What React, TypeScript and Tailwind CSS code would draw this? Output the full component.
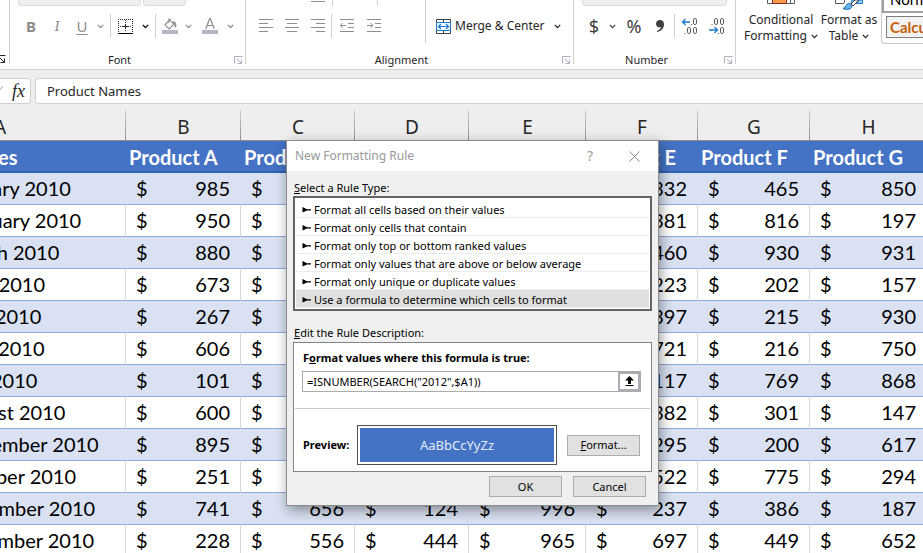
import { useState, type ReactNode } from "react";
import clsx from "clsx";

type Amount = number | null;

interface Row {
  month: string;
  amounts: Amount[];
}

const COLUMNS = ["A", "B", "C", "D", "E", "F", "G", "H"];

const HEADERS = [
  "Names",
  "Product A",
  "Product B",
  "Product C",
  "Product D",
  "Product E",
  "Product F",
  "Product G",
];

const ROWS: Row[] = [
  { month: "January 2010", amounts: [985, null, null, null, 332, 465, 850] },
  { month: "February 2010", amounts: [950, null, null, null, 381, 816, 197] },
  { month: "March 2010", amounts: [880, null, null, null, 460, 930, 931] },
  { month: "April 2010", amounts: [673, null, null, null, 223, 202, 157] },
  { month: "May 2010", amounts: [267, null, null, null, 397, 215, 930] },
  { month: "June 2010", amounts: [606, null, null, null, 721, 216, 750] },
  { month: "July 2010", amounts: [101, null, null, null, 117, 769, 868] },
  { month: "August 2010", amounts: [600, null, null, null, 382, 301, 147] },
  { month: "September 2010", amounts: [895, null, null, null, 295, 200, 617] },
  { month: "October 2010", amounts: [251, null, null, null, 522, 775, 294] },
  { month: "November 2010", amounts: [741, 656, 124, 996, 237, 386, 187] },
  { month: "December 2010", amounts: [228, 556, 444, 965, 697, 449, 652] },
];

const RULE_TYPES = [
  "Format all cells based on their values",
  "Format only cells that contain",
  "Format only top or bottom ranked values",
  "Format only values that are above or below average",
  "Format only unique or duplicate values",
  "Use a formula to determine which cells to format",
];

/* ---------- icons ---------- */

function Chevron({ className }: { className?: string }) {
  return (
    <svg width="7" height="5" viewBox="0 0 7 5" className={clsx("shrink-0", className)} aria-hidden="true">
      <path d="M0.8 0.9 3.5 3.6 6.2 0.9" fill="none" stroke="currentColor" strokeWidth="1.3" />
    </svg>
  );
}

function LauncherIcon() {
  return (
    <svg width="9" height="9" viewBox="0 0 9 9" fill="none" stroke="currentColor" aria-hidden="true">
      <path d="M8.5 0.5H0.5V7.5" />
      <path d="M3 3 7.5 7.5M7.5 3.5V7.5H3.5" />
    </svg>
  );
}

function LinesIcon({ rows }: { rows: [number, number][] }) {
  return (
    <svg width="14" height="14" viewBox="0 0 14 14" stroke="#8f8f8f" aria-hidden="true">
      {rows.map(([from, to], i) => (
        <path key={i} d={`M${from} ${i * 4 + 0.5}H${to}`} />
      ))}
    </svg>
  );
}

function IndentIcon({ inward }: { inward?: boolean }) {
  return (
    <svg width="14" height="14" viewBox="0 0 14 14" fill="none" stroke="#8f8f8f" aria-hidden="true">
      <path d="M0 0.5H14M8 4.5H14M8 8.5H14M0 12.5H14" />
      {inward ? (
        <path d="M0 6.5H5.5M3.5 4 6 6.5 3.5 9" />
      ) : (
        <path d="M0.5 6.5H6M2.5 4 0.5 6.5 2.5 9" />
      )}
    </svg>
  );
}

function BordersIcon() {
  return (
    <svg width="15" height="15" viewBox="0 0 15 15" fill="none" stroke="#262626" aria-hidden="true">
      <path d="M0 0.5H15M0.5 0V13M14.5 0V13" strokeDasharray="1 1" />
      <path d="M7.5 1V12M2 7.5H13" strokeDasharray="1 1" />
      <path d="M7.5 5V10M5 7.5H10" />
      <path d="M0 14.5H15" stroke="#000" />
    </svg>
  );
}

function FillIcon() {
  return (
    <svg width="16" height="16" viewBox="0 0 16 16" fill="none" stroke="#8c8c8c" aria-hidden="true">
      <path d="M8.5 1 3 6.8 7.2 11 12 6 7 1.2V5" strokeWidth="1.1" />
      <path d="M10.5 4.6C12.8 3.6 13.8 5.6 13.4 9.4" strokeWidth="1.8" />
      <path d="M0 14H16" stroke="#b6b6c4" strokeWidth="4" />
    </svg>
  );
}

function FontColorIcon() {
  return (
    <svg width="16" height="16" viewBox="0 0 16 16" fill="none" stroke="#8c8c8c" aria-hidden="true">
      <path d="M3.8 10.8 7.7 0.5H8.3L12.2 10.8M5.2 7.5H10.8" strokeWidth="1.2" />
      <path d="M0 14H16" stroke="#b6b6c4" strokeWidth="4" />
    </svg>
  );
}

function MergeIcon() {
  return (
    <svg width="15" height="15" viewBox="0 0 15 15" fill="none" stroke="#404040" aria-hidden="true">
      <path d="M0.5 3.5V0.5H14.5V3.5M0.5 11.5V14.5H14.5V11.5M7.5 0.5V3.5M7.5 11.5V14.5" />
      <path d="M0.5 3.5H14.5V11.5H0.5Z" stroke="#1a7ad0" fill="#f3f9ff" />
      <path d="M2.5 7.5H12.5M5 5 2.5 7.5 5 10M10 5 12.5 7.5 10 10" stroke="#1a7ad0" strokeWidth="1.2" />
    </svg>
  );
}

// Zeros are small rounded outlines, with the arrow standing in for the missing one.
function DecimalIcon({ decrease }: { decrease?: boolean }) {
  const zeros = decrease
    ? [[5.5, 0.5], [11.5, 0.5], [11.5, 9.5]]
    : [[11.5, 0.5], [5.5, 9.5], [11.5, 9.5]];
  const dots = decrease ? [[2.5, 6], [9, 15]] : [[9, 6], [2.5, 15]];
  return (
    <svg width="16" height="17" viewBox="0 0 16 17" fill="none" stroke="#5c5c5c" aria-hidden="true">
      {zeros.map(([x, y]) => (
        <rect key={`${x}-${y}`} x={x} y={y} width="3" height="6" rx="1.4" />
      ))}
      {dots.map(([x, y]) => (
        <rect key={`${x}-${y}`} x={x} y={y} width="1" height="1" fill="#5c5c5c" stroke="none" />
      ))}
      {decrease ? (
        <path d="M0 12H8M5.5 9 8.5 12 5.5 15" stroke="#1a7ad0" strokeWidth="1.3" />
      ) : (
        <path d="M0.5 4H8M3.5 1 0.5 4 3.5 7" stroke="#1a7ad0" strokeWidth="1.3" />
      )}
    </svg>
  );
}

function ConditionalIcon() {
  return (
    <svg width="28" height="4" viewBox="0 0 28 4" fill="none" aria-hidden="true">
      <path d="M0.5 0V3.5H27.5V0M23.5 0V3" stroke="#5a5a5a" />
      <path d="M5.5 0V3.5H19.5V0" fill="#f79a4c" stroke="#8a2c1c" />
    </svg>
  );
}

function TableIcon() {
  return (
    <svg width="28" height="10" viewBox="0 0 28 10" fill="none" aria-hidden="true">
      <path d="M0.5 0V3.5H9M9.5 0V3" stroke="#5a5a5a" />
      <path d="M17 0H27.5V3.5H16Z" fill="#9fd0f5" stroke="#1a7ad0" />
      <path d="M23 0V3" stroke="#1a7ad0" />
      <path d="M16 4 20 0H24L18 6Z" fill="#fff" stroke="#404040" />
      <path
        d="M8 8.5C11 8 10.5 4 13.5 3.5 16 3.5 17.5 5.5 16.5 7.5 15 9.8 10.5 9.8 8 8.5Z"
        fill="#6cb6f0"
        stroke="#1565b0"
      />
    </svg>
  );
}

function CommaIcon() {
  return (
    <svg width="8" height="12" viewBox="0 0 8 12" aria-hidden="true">
      <path
        d="M4 0C6.5 0 8 1.6 8 4.2 8 8 5.5 11 1 12V10.8C3.5 10 4.8 8.8 5 7 4.5 7.3 4 7.4 3.5 7.4 1.5 7.4 0 6 0 3.8 0 1.6 1.6 0 4 0Z"
        fill="#404040"
      />
    </svg>
  );
}

function CollapseIcon() {
  return (
    <svg width="9" height="11" viewBox="0 0 9 11" aria-hidden="true">
      <path d="M4.5 0 9 4.5H6V8H3V4.5H0Z" fill="#000" />
      <path d="M0.5 9.5H8.5" stroke="#000" />
    </svg>
  );
}

function PointerIcon() {
  return (
    <svg width="9" height="6" viewBox="0 0 9 6" aria-hidden="true">
      <path d="M0.5 0 5 2.2H9V3.5H5L0.5 5.5Z" fill="#000" />
    </svg>
  );
}

/* ---------- ribbon ---------- */

function RibbonButton({
  label,
  className,
  children,
}: {
  label: string;
  className?: string;
  children: ReactNode;
}) {
  return (
    <button
      type="button"
      aria-label={label}
      className={clsx("flex h-6 shrink-0 items-center justify-center", className)}
    >
      {children}
    </button>
  );
}

function Divider() {
  return <div className="h-6 w-px shrink-0 bg-[#d0d0d0]" />;
}

function RibbonGroup({
  label,
  className,
  children,
}: {
  label: string;
  className?: string;
  children: ReactNode;
}) {
  return (
    <section
      className={clsx("flex h-16 shrink-0 flex-col justify-between border-r border-[#d0d0d0]", className)}
    >
      {children}
      <div className="relative -mb-1 flex h-4 items-center justify-center pr-4">
        <h2 className="text-[11px] leading-4">{label}</h2>
        <button
          type="button"
          aria-label={`${label} settings`}
          className="absolute top-1 right-0.5 text-[#b0b0c0]"
        >
          <LauncherIcon />
        </button>
      </div>
    </section>
  );
}

// Only the right edge of the clipboard group is in view.
function ClipboardGroup() {
  return (
    <section className="flex h-16 w-2.5 shrink-0 items-end justify-end border-r border-[#d0d0d0] pr-[3px]">
      <button type="button" aria-label="Clipboard settings">
        <LauncherIcon />
      </button>
    </section>
  );
}

function FontGroup() {
  return (
    <RibbonGroup label="Font" className="w-[236px]">
      <div>
        <div className="flex h-1.5 gap-0.5 pl-2">
          <div className="w-[123px] rounded-b border border-t-0 border-[#dadada] bg-[#f0f0f0]" />
          <div className="w-[43px] rounded-b border border-t-0 border-[#dadada] bg-[#f0f0f0]" />
        </div>
        <div className="mt-2 flex items-center pl-2 text-[15px] text-[#8c8c8c]">
          <RibbonButton label="Bold" className="w-[26px] font-bold">
            B
          </RibbonButton>
          <RibbonButton label="Italic" className="w-[26px] font-serif italic">
            I
          </RibbonButton>
          <RibbonButton label="Underline" className="w-6 underline underline-offset-2">
            U
          </RibbonButton>
          <RibbonButton label="Underline styles" className="mr-1 w-3">
            <Chevron />
          </RibbonButton>
          <Divider />
          <RibbonButton label="Borders" className="w-7">
            <BordersIcon />
          </RibbonButton>
          <RibbonButton label="Border styles" className="mr-1 w-3 text-black">
            <Chevron />
          </RibbonButton>
          <Divider />
          <RibbonButton label="Fill color" className="w-7">
            <FillIcon />
          </RibbonButton>
          <RibbonButton label="Fill color options" className="mr-1 w-2">
            <Chevron />
          </RibbonButton>
          <RibbonButton label="Font color" className="w-7">
            <FontColorIcon />
          </RibbonButton>
          <RibbonButton label="Font color options" className="w-3">
            <Chevron />
          </RibbonButton>
        </div>
      </div>
    </RibbonGroup>
  );
}

function AlignmentGroup() {
  return (
    <RibbonGroup label="Alignment" className="w-[328px]">
      <div className="flex">
        <div className="w-[180px] border-r border-[#d0d0d0]">
          <div className="flex h-1.5">
            <div className="mt-px ml-[65px] h-px w-3.5 bg-[#8f8f8f]" />
            <div className="ml-[7px] w-px bg-[#d0d0d0]" />
            <div className="ml-11 w-px bg-[#d0d0d0]" />
          </div>
          <div className="mt-2 flex items-center pl-[7px]">
            <RibbonButton label="Align left" className="w-[26px]">
              <LinesIcon rows={[[0, 14], [0, 9], [0, 14], [0, 9]]} />
            </RibbonButton>
            <RibbonButton label="Center" className="w-[26px]">
              <LinesIcon rows={[[0, 14], [2, 12], [0, 14], [2, 12]]} />
            </RibbonButton>
            <RibbonButton label="Align right" className="w-[26px]">
              <LinesIcon rows={[[0, 14], [5, 14], [0, 14], [5, 14]]} />
            </RibbonButton>
            <Divider />
            <RibbonButton label="Decrease indent" className="w-[30px]">
              <IndentIcon />
            </RibbonButton>
            <RibbonButton label="Increase indent" className="w-6">
              <IndentIcon inward />
            </RibbonButton>
          </div>
          <div className="h-[5px]" />
        </div>
        <div className="flex items-center self-start pt-3.5 pl-2.5">
          <button type="button" className="flex h-6 items-center gap-1 text-xs">
            <MergeIcon />
            <span className="w-[96px] text-left whitespace-nowrap">Merge &amp; Center</span>
          </button>
          <RibbonButton label="Merge options" className="w-3">
            <Chevron />
          </RibbonButton>
        </div>
      </div>
    </RibbonGroup>
  );
}

function NumberGroup() {
  return (
    <RibbonGroup label="Number" className="w-[162px]">
      <div>
        <div className="mx-2 h-1.5 rounded-b border border-t-0 border-[#dadada] bg-[#f0f0f0]" />
        <div className="mt-2 flex items-center pl-2 text-lg text-[#404040]">
          <RibbonButton label="Accounting format" className="w-6">
            $
          </RibbonButton>
          <RibbonButton label="Accounting options" className="w-3">
            <Chevron />
          </RibbonButton>
          <RibbonButton label="Percent style" className="w-8">
            %
          </RibbonButton>
          <RibbonButton label="Comma style" className="mr-1 w-5">
            <CommaIcon />
          </RibbonButton>
          <Divider />
          <RibbonButton label="Increase decimal" className="w-[30px]">
            <DecimalIcon />
          </RibbonButton>
          <RibbonButton label="Decrease decimal" className="w-6">
            <DecimalIcon decrease />
          </RibbonButton>
        </div>
      </div>
    </RibbonGroup>
  );
}

function StylesGroup() {
  return (
    <section className="flex min-w-0 flex-1 pl-1.5 text-xs leading-4">
      <button type="button" className="flex w-[78px] shrink-0 flex-col items-center">
        <ConditionalIcon />
        <span className="mt-2">Conditional</span>
        <span className="flex items-center gap-1 whitespace-nowrap">
          Formatting <Chevron />
        </span>
      </button>
      <button type="button" className="flex w-[58px] shrink-0 flex-col items-center">
        <TableIcon />
        <span className="mt-0.5 whitespace-nowrap">Format as</span>
        <span className="flex items-center gap-1">
          Table <Chevron />
        </span>
      </button>
      <div className="ml-[3px] h-11 min-w-0 flex-1 overflow-hidden rounded-bl border-b border-l border-[#c6c6c6] font-['Lato',sans-serif]">
        <button
          type="button"
          className="flex h-[13px] w-24 items-end border-b-2 border-l-2 border-[#a0a0a0] pb-0.5 pl-1.5 text-[15px] leading-5 text-black"
        >
          Normal
        </button>
        <button
          type="button"
          className="mt-[3px] ml-1 flex h-[22px] w-24 items-center border border-[#7f7f7f] bg-[#f2f2f2] pl-[3px] text-[15px] font-bold text-[#c65f08]"
        >
          Calculation
        </button>
      </div>
    </section>
  );
}

function Ribbon() {
  return (
    <header className="flex h-[70px] shrink-0 overflow-hidden border-b border-[#d0d0d0] bg-white text-[#262626]">
      <ClipboardGroup />
      <FontGroup />
      <AlignmentGroup />
      <NumberGroup />
      <StylesGroup />
    </header>
  );
}

function FormulaBar() {
  return (
    <div className="flex h-[38px] shrink-0 gap-1 bg-[#eeeeee] pt-2">
      <div className="flex h-[26px] w-[31px] shrink-0 items-center justify-end overflow-hidden rounded-r border border-l-0 border-[#d0d0d0] bg-white pr-[5px]">
        <svg width="7" height="10" viewBox="0 0 7 10" className="mr-2 shrink-0" aria-hidden="true">
          <path d="M1 6 6 0" fill="none" stroke="#a0a0a0" />
        </svg>
        <button
          type="button"
          aria-label="Insert function"
          className="font-['Liberation_Serif',serif] text-lg leading-5 text-[#262626] italic"
        >
          fx
        </button>
      </div>
      <input
        aria-label="Formula bar"
        defaultValue="Product Names"
        className="h-[26px] min-w-0 flex-1 rounded-l border border-r-0 border-[#d0d0d0] bg-white px-[11px] text-[13px] text-[#262626] outline-none"
      />
    </div>
  );
}

/* ---------- sheet ---------- */

function Sheet() {
  return (
    <div className="min-h-0 flex-1 overflow-hidden">
      {/* column A is partly scrolled out of view */}
      <table className="-ml-12 w-[975px] table-fixed border-separate border-spacing-0 font-['Lato','Carlito',sans-serif] text-xl leading-6 text-black">
        <colgroup>
          <col className="w-[174px]" />
          <col className="w-[115px]" />
          <col className="w-[114px]" />
          <col className="w-[114px]" />
          <col className="w-[117px]" />
          <col className="w-[112px]" />
          <col className="w-[112px]" />
          <col className="w-[117px]" />
        </colgroup>
        <thead>
          <tr className="h-[33px] bg-[#eeeeee] font-['Noto_Sans',sans-serif] text-[19px]">
            {COLUMNS.map((letter, i) => (
              <th
                key={letter}
                scope="col"
                className={clsx(
                  "border-b border-b-[#8a8a8a] bg-[linear-gradient(#d0d0d0,#8e8e8e)] bg-[length:1px_30px] bg-right-bottom bg-no-repeat p-0 pt-1.5 font-normal text-[#262626]",
                  i === 0 && "pr-[78px]",
                )}
              >
                {letter}
              </th>
            ))}
          </tr>
        </thead>
        <tbody>
          <tr className="h-8 bg-[#4472c4] text-white">
            {HEADERS.map((title, i) => (
              <th
                key={title}
                scope="col"
                className={clsx(
                  "overflow-hidden border-b-2 border-[#2d62b4] p-0 pt-0.5 text-left font-bold whitespace-nowrap",
                  i > 0 ? "pl-[3px]" : "pl-1",
                )}
              >
                {title}
              </th>
            ))}
          </tr>
          {ROWS.map((row, r) => {
            const banded = r % 2 === 0;
            const cell = clsx(
              "border-r border-b border-b-[#8eaadb] p-0 pb-0.5 whitespace-nowrap",
              banded ? "border-r-transparent" : "border-r-[#d8d8d8]",
            );

            return (
              <tr key={row.month} className={clsx("h-8", banded ? "bg-[#d9e1f2]" : "bg-white")}>
                <td className={cell}>{row.month}</td>
                {row.amounts.map((amount, c) => (
                  <td key={c} className={cell}>
                    <div className="flex justify-between px-2.5">
                      <span>$</span>
                      <span>{amount}</span>
                    </div>
                  </td>
                ))}
              </tr>
            );
          })}
        </tbody>
      </table>
    </div>
  );
}

/* ---------- dialog ---------- */

function DialogButton({ children }: { children: ReactNode }) {
  return (
    <button
      type="button"
      className="h-[21px] w-[73px] border border-[#adadad] bg-[#e1e1e1] text-[11px] leading-4 text-black"
    >
      {children}
    </button>
  );
}

function NewRuleDialog() {
  const [selected, setSelected] = useState(5);
  const [formula, setFormula] = useState('=ISNUMBER(SEARCH("2012",$A1))');

  return (
    <div
      role="dialog"
      aria-labelledby="dialog-title"
      className="absolute top-[140px] left-[286px] w-[373px] border border-[#8c8c8c] bg-[#f0f0f0] pb-2 text-[11px] leading-4 text-black shadow-[2px_4px_12px_rgba(0,0,0,0.4)]"
    >
      <div className="flex h-[30px] items-center bg-white pr-3 pl-2 text-[#999999]">
        <h1 id="dialog-title" className="flex-1 text-xs">
          New Formatting Rule
        </h1>
        <button type="button" aria-label="Help" className="w-6 text-sm">
          ?
        </button>
        <button type="button" aria-label="Close" className="ml-5 flex w-6 items-center justify-center">
          <svg width="11" height="11" viewBox="0 0 11 11" aria-hidden="true">
            <path d="M0.5 0.5 10.5 10.5M10.5 0.5 0.5 10.5" stroke="#8c8c8c" />
          </svg>
        </button>
      </div>

      <div className="px-1.5 pt-[9px]">
        <h2 id="rule-type" className="pl-px">
          <span className="underline">S</span>elect a Rule Type:
        </h2>
        <ul aria-labelledby="rule-type" className="border-2 border-[#646464] bg-white px-px pt-0.5 pb-px">
          {RULE_TYPES.map((rule, i) => (
            <li key={rule}>
              <button
                type="button"
                aria-pressed={i === selected}
                onClick={() => setSelected(i)}
                className={clsx(
                  "flex h-[18px] w-full items-center gap-[3px] border-b border-[#ececec] pt-0.5 pl-1.5 text-left",
                  i === selected && "bg-[#e0e0e0]",
                )}
              >
                <PointerIcon />
                {rule}
              </button>
            </li>
          ))}
        </ul>

        <h2 className="mt-3.5 pl-px">
          <span className="underline">E</span>dit the Rule Description:
        </h2>
        <div className="mt-px h-[130px] border border-[#82828a] bg-white">
          <div className="px-2 pt-[7px]">
            <label htmlFor="formula" className="pl-px font-bold">
              F<span className="underline">o</span>rmat values where this formula is true:
            </label>
            <div className="mt-[5px] mr-0.5 flex h-[21px] border border-[#ababab]">
              <input
                id="formula"
                value={formula}
                onChange={(e) => setFormula(e.target.value)}
                className="min-w-0 flex-1 px-1 outline-none"
              />
              <button
                type="button"
                aria-label="Collapse dialog"
                className="flex w-[22px] items-center justify-center border-2 border-[#ababb3] bg-white"
              >
                <CollapseIcon />
              </button>
            </div>
          </div>
          <hr className="mx-px mt-4 border-[#c6c6c6]" />
          <div className="mt-4 flex items-center pl-[9px]">
            <span className="w-[54px] font-bold">Preview:</span>
            <div className="h-10 w-[200px] border border-[#505050] p-0.5">
              <div className="flex h-full items-center justify-center bg-[#4472c4] text-[13px] text-[#e4ecf8]">
                AaBbCcYyZz
              </div>
            </div>
            <div className="ml-2.5 flex">
              <DialogButton>
                <span className="underline">F</span>ormat...
              </DialogButton>
            </div>
          </div>
        </div>
        <div className="mt-1 flex justify-end gap-[11px] pr-1.5">
          <DialogButton>OK</DialogButton>
          <DialogButton>Cancel</DialogButton>
        </div>
      </div>
    </div>
  );
}

export default function App() {
  return (
    <main className="relative flex h-screen flex-col overflow-hidden bg-white font-['Noto_Sans',sans-serif]">
      <Ribbon />
      <FormulaBar />
      <Sheet />
      <NewRuleDialog />
    </main>
  );
}
